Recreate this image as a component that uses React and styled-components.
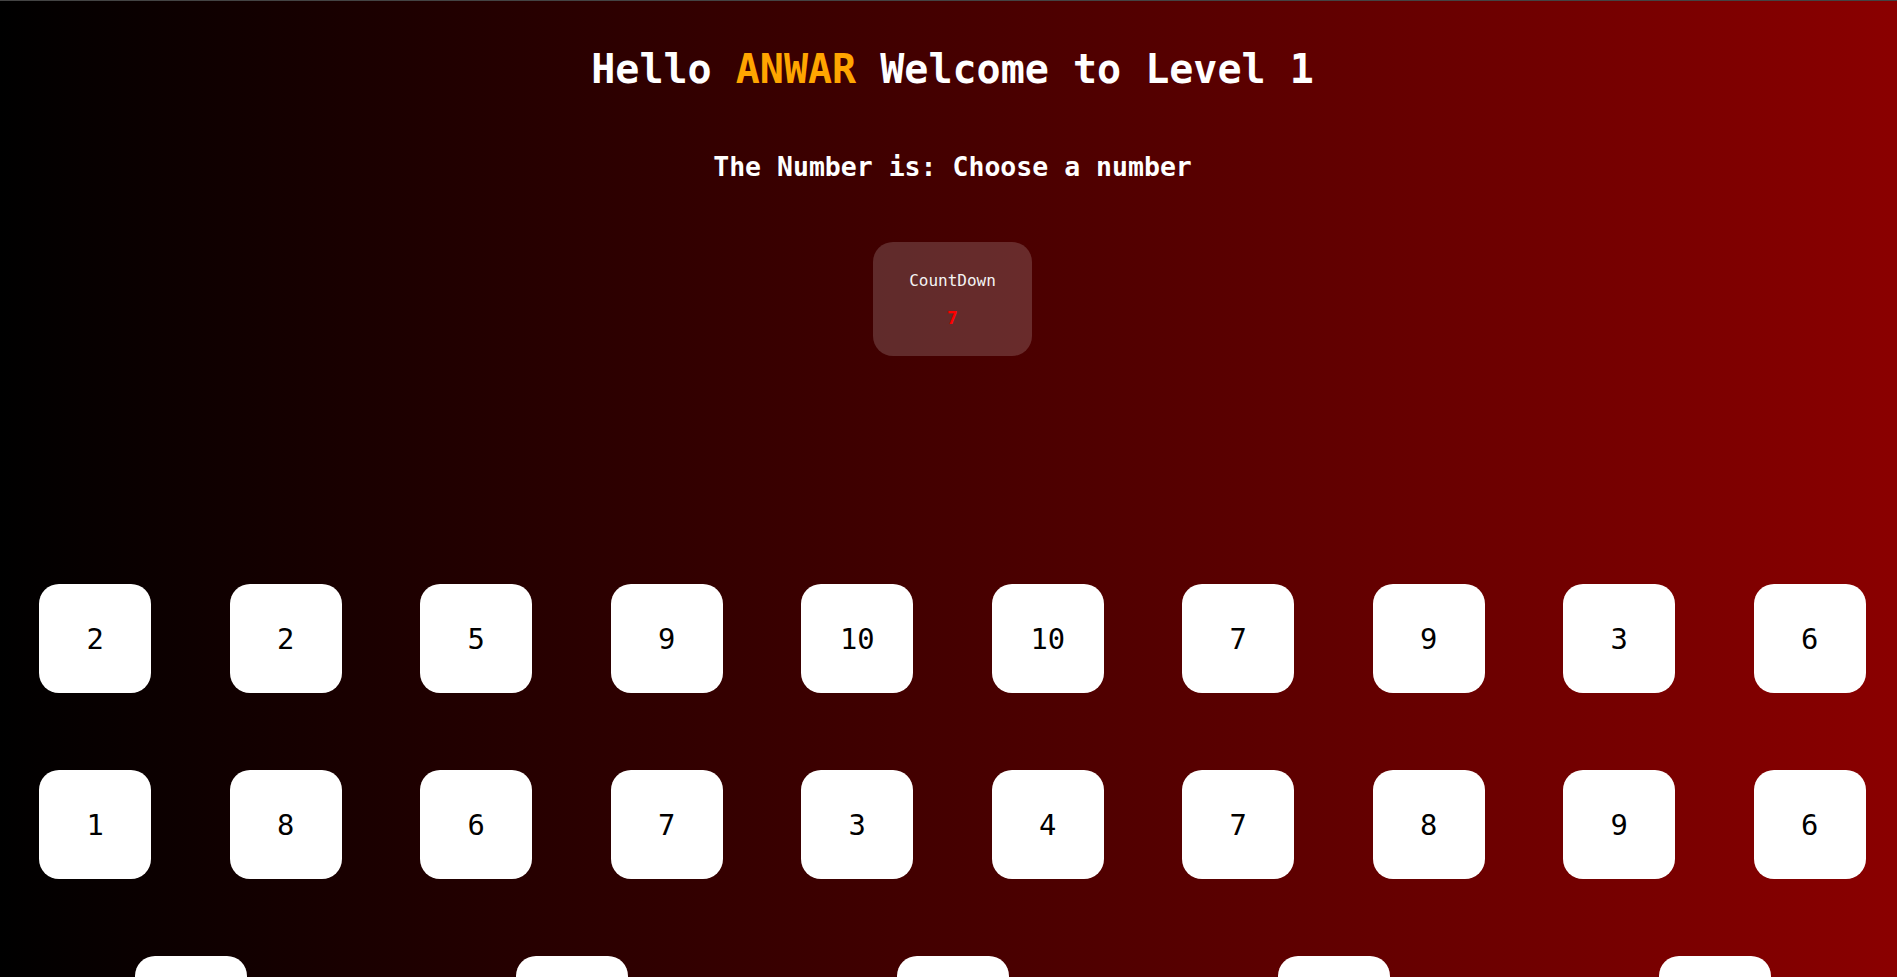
import React from "react";
import styled, { createGlobalStyle } from "styled-components";

const GlobalStyle = createGlobalStyle`
  html, body {
    margin: 0;
    padding: 0;
    background: #000;
    overflow: hidden;
  }
  * { box-sizing: border-box; }
`;

const Page = styled.div`
  width: 1905px;
  min-height: 977px;
  border-top: 1px solid #444;
  background: linear-gradient(to right, #000000, #8b0000);
  font-family: "DejaVu Sans Mono", "Liberation Mono", monospace;
  color: #fff;
  display: flex;
  flex-direction: column;
  align-items: center;
`;

const Title = styled.h1`
  margin: 45px 0 0;
  font-size: 40px;
  font-weight: bold;
  line-height: normal;
  text-align: center;
`;

const Name = styled.span`
  color: #ffa500;
`;

const Subtitle = styled.h2`
  margin: 58.6px 0 0;
  font-size: 26.5px;
  font-weight: bold;
  line-height: normal;
  text-align: center;
`;

const Countdown = styled.div`
  margin-top: 60px;
  width: 159px;
  height: 114px;
  padding-top: 29px;
  border-radius: 20px;
  background: rgba(255, 255, 255, 0.17);
  display: flex;
  flex-direction: column;
  align-items: center;
`;

const CountLabel = styled.div`
  font-size: 16px;
  line-height: normal;
  color: #f4f4f4;
`;

const CountValue = styled.div`
  margin-top: 17.5px;
  font-size: 18px;
  font-weight: bold;
  line-height: normal;
  color: #ff0000;
`;

const Board = styled.div`
  margin-top: 190px;
  width: 100%;
  display: flex;
  flex-wrap: wrap;
  justify-content: space-around;
`;

const Tile = styled.div`
  width: 112px;
  height: 109px;
  margin: 38.5px;
  border-radius: 20px;
  background: #fff;
  color: #000;
  font-size: 28.8px;
  display: flex;
  align-items: center;
  justify-content: center;
  cursor: pointer;
`;

const numbers = [
  2, 2, 5, 9, 10, 10, 7, 9, 3, 6,
  1, 8, 6, 7, 3, 4, 7, 8, 9, 6,
  5, 2, 8, 1, 4,
];

export default function App() {
  return (
    <>
      <GlobalStyle />
      <Page>
        <Title>
          Hello <Name>ANWAR</Name> Welcome to Level 1
        </Title>
        <Subtitle>The Number is: Choose a number</Subtitle>
        <Countdown>
          <CountLabel>CountDown</CountLabel>
          <CountValue>7</CountValue>
        </Countdown>
        <Board>
          {numbers.map((n, i) => (
            <Tile key={i}>{n}</Tile>
          ))}
        </Board>
      </Page>
    </>
  );
}
